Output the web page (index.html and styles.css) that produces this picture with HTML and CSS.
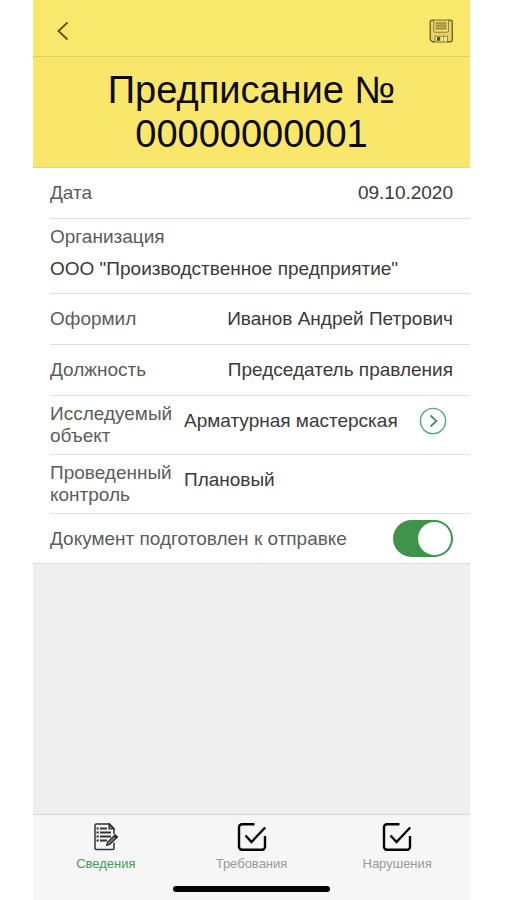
FILE: index.html
```html
<!DOCTYPE html>
<html lang="ru">
<head>
<meta charset="utf-8">
<meta name="viewport" content="width=device-width, initial-scale=1">
<title>Предписание № 00000000001</title>
<link rel="stylesheet" href="styles.css">
</head>
<body>
<div class="screen">
  <header class="header">
    <div class="toolbar">
      <button class="icon-button" type="button" aria-label="Назад">
        <svg width="12" height="20" viewBox="0 0 12 20" fill="none" stroke="#5c4e12" stroke-width="1.800"><path d="M10.500 1.500 1.500 10l9 8.500"/></svg>
      </button>
      <button class="icon-button" type="button" aria-label="Сохранить">
        <svg width="24" height="24" viewBox="0 0 24 24" fill="none" stroke="#857935">
          <path d="M3 1.200h18.300a2 2 0 0 1 2 2v17.500a2 2 0 0 1-2 2H3.500l-2.300-2V3a1.800 1.800 0 0 1 1.800-1.800z" fill="#e3d565" stroke="#75692a" stroke-width="1.400"/>
          <path d="M4.800 1.500v10.700a1 1 0 0 0 1 1h12.600a1 1 0 0 0 1-1V1.500" fill="#f3e780" stroke-width="1"/>
          <path d="M6.500 2.500h11V11h-11z" fill="#b5a94c" stroke="none"/>
          <path d="M6.500 4.500h11M6.500 7h11M6.500 9.500h11" stroke="#9b8f40" stroke-width=".8"/>
          <path d="M6 22.500v-5.300h12.500v5.300" fill="#f3e780" stroke-width=".9"/>
          <path d="M8 18h3.200v3.800H8z" fill="#5e531c" stroke="none"/>
          <path d="M14.500 17.500v4.500" stroke-width=".6"/>
        </svg>
      </button>
    </div>
    <h1 class="title">Предписание № 00000000001</h1>
  </header>

  <main class="content">
    <dl class="fields">
      <div class="row">
        <dt>Дата</dt>
        <dd class="end">09.10.2020</dd>
      </div>
      <div class="row stacked">
        <dt>Организация</dt>
        <dd>ООО "Производственное предприятие"</dd>
      </div>
      <div class="row">
        <dt>Оформил</dt>
        <dd class="end">Иванов Андрей Петрович</dd>
      </div>
      <div class="row">
        <dt>Должность</dt>
        <dd class="end">Председатель правления</dd>
      </div>
      <div class="row split">
        <dt>Исследуемый объект</dt>
        <dd>Арматурная мастерская</dd>
        <dd class="action">
          <button class="icon-button" type="button" aria-label="Открыть объект">
            <svg width="28" height="28" viewBox="0 0 28 28" fill="none" stroke="#5aa577" stroke-width="1.400"><circle cx="14" cy="14" r="12.600"/><path d="m11.500 8.500 6 5.500-6 5.500" stroke="#438f5d" stroke-width="1.700"/></svg>
          </button>
        </dd>
      </div>
      <div class="row split">
        <dt>Проведенный контроль</dt>
        <dd>Плановый</dd>
      </div>
    </dl>
    <div class="row last">
      <label for="ready">Документ подготовлен к отправке</label>
      <input class="switch" id="ready" type="checkbox" role="switch" checked>
    </div>
  </main>

  <footer class="footer">
    <nav class="tabs">
      <a class="tab active" href="#info">
        <svg width="30" height="30" viewBox="0 0 30 30" fill="none" stroke="#333">
          <path d="M23 20.500V26a1.500 1.500 0 0 1-1.500 1.500h-16A1.500 1.500 0 0 1 4 26V3.500A1.500 1.500 0 0 1 5.500 2h13L23 6.500V12" stroke-width="1.500"/>
          <path d="M18 2v5h5z" fill="#777" stroke-width="1.200"/>
          <path d="M9 6.500h7M9 10.500h11M9 14.500h11M9 18.500h7" stroke-width="2"/>
          <path d="M5.500 6.500h2.200M5.500 10.500h2.200M5.500 14.500h2.200M5.500 18.500h2.200" stroke-width="2.200"/>
          <path d="m23.700 13.200 2.300 2.300-7.300 7-3 .9.800-3z" fill="#777" stroke-width="1.300"/>
          <path d="m22.800 14 2.400 2.400 1.500-1.500-2.400-2.400z" fill="#222" stroke-width="1"/>
        </svg>
        Сведения
      </a>
      <a class="tab" href="#requirements">
        <svg width="30" height="30" viewBox="0 0 30 30" fill="none" stroke="#050505" stroke-width="2.400"><path d="M17.500 2.200H5A3 3 0 0 0 2 5.200v19.600a3 3 0 0 0 3 3h20a3 3 0 0 0 3-3V14"/><path d="m8.500 13.500 6 6.500L28.200 5.500"/></svg>
        Требования
      </a>
      <a class="tab" href="#violations">
        <svg width="30" height="30" viewBox="0 0 30 30" fill="none" stroke="#050505" stroke-width="2.400"><path d="M17.500 2.200H5A3 3 0 0 0 2 5.200v19.600a3 3 0 0 0 3 3h20a3 3 0 0 0 3-3V14"/><path d="m8.500 13.500 6 6.500L28.200 5.500"/></svg>
        Нарушения
      </a>
    </nav>
    <div class="home-bar"></div>
  </footer>
</div>
</body>
</html>
```
FILE: styles.css
```css
* {
  box-sizing: border-box;
}

body {
  margin: 0;
  padding: 0 37px 0 33px;
  background: #fff;
  color: #3a3a3a;
  font-family: "Liberation Sans", Arial, sans-serif;
  font-size: 19px;
  line-height: 22px;
}

.screen {
  display: flex;
  flex-direction: column;
  min-height: 100vh;
  background: #efefef;
}

.header {
  background: #f9e76c;
  border-bottom: 1px solid #d8d3ac;
}

.toolbar {
  display: flex;
  align-items: center;
  justify-content: space-between;
  height: 57px;
  padding: 6px 17px 0 24px;
  background: #f8e96c;
  border-bottom: 1px solid #dfcf62;
}

.icon-button {
  display: flex;
  margin: 0;
  padding: 0;
  border: 0;
  background: none;
  cursor: pointer;
}

.title {
  margin: 0;
  padding: 11px 48px;
  color: #0c0a02;
  font-size: 38px;
  font-weight: 400;
  line-height: 44px;
  text-align: center;
}

.content {
  background: #fff;
  border-bottom: 1px solid #dcdcdc;
}

.fields,
.fields dd {
  margin: 0;
}

.row {
  display: flex;
  align-items: center;
  gap: 10px;
  min-height: 51px;
  margin-left: 17px;
  padding-right: 17px;
  border-bottom: 1px solid #dedede;
}

.row dt,
.row label {
  color: #5c5c5c;
}

.end {
  flex: 1;
  text-align: right;
}

.stacked {
  flex-direction: column;
  align-items: flex-start;
  padding-top: 7px;
  padding-bottom: 13px;
}

.split {
  min-height: 59px;
}

.split dt {
  width: 124px;
}

.split dd {
  padding-bottom: 8px;
}

.split .action {
  flex: 1;
  display: flex;
  justify-content: flex-end;
  padding-right: 6px;
}

.last {
  justify-content: space-between;
  min-height: 49px;
  border-bottom: 0;
}

.switch {
  appearance: none;
  display: flex;
  width: 60px;
  height: 37px;
  margin: 0;
  padding: 2px;
  border-radius: 19px;
  background: #c8c8c8;
  cursor: pointer;
}

.switch::before {
  content: "";
  width: 33px;
  height: 33px;
  border-radius: 50%;
  background: #fff;
}

.switch:checked {
  justify-content: flex-end;
  background: #3f934b;
}

.footer {
  display: flex;
  flex-direction: column;
  align-items: center;
  margin-top: auto;
  padding-bottom: 8px;
  background: #f6f6f6;
  border-top: 1px solid #dadada;
}

.tabs {
  display: flex;
  width: 100%;
}

.tab {
  flex: 1;
  display: flex;
  flex-direction: column;
  align-items: center;
  gap: 4px;
  padding-top: 7px;
  color: #9a9a9a;
  font-size: 13px;
  line-height: 16px;
  text-decoration: none;
}

.tab.active {
  color: #459a58;
}

.home-bar {
  width: 36%;
  height: 6px;
  margin-top: 14px;
  border-radius: 3px;
  background: #000;
}
```
